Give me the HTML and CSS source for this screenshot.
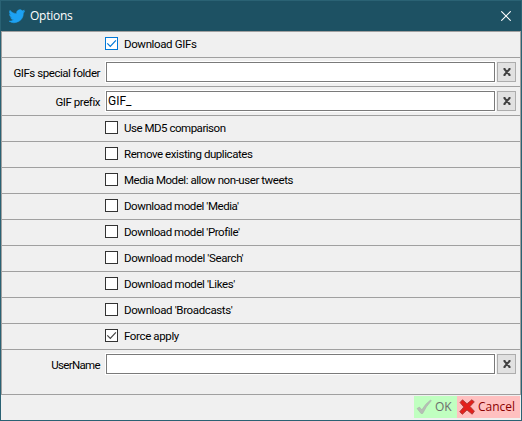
FILE: index.html
```html
<!DOCTYPE html>
<html lang="en">
<head>
<meta charset="utf-8">
<title>Options</title>
<link rel="stylesheet" href="styles.css">
</head>
<body>
<div class="window">
  <header class="titlebar">
    <svg class="bird" viewBox="0 0 24 24"><path d="M23.600 4.900a9.600 9.600 0 0 1-2.800.8 4.900 4.900 0 0 0 2.200-2.700 9.800 9.800 0 0 1-3.100 1.200 4.900 4.900 0 0 0-8.400 4.500A13.900 13.900 0 0 1 1.400 3.500a4.900 4.900 0 0 0 1.500 6.500 4.900 4.900 0 0 1-2.200-.6c0 2.300 1.600 4.400 3.900 4.900a4.900 4.900 0 0 1-2.200.1 4.900 4.900 0 0 0 4.600 3.400A9.900 9.900 0 0 1 0 19.800a13.900 13.900 0 0 0 21.500-12.300 10 10 0 0 0 2.100-2.600z"/></svg>
    <span class="title">Options</span>
    <svg class="close" viewBox="0 0 10 10"><path d="M.3.3l9.400 9.400M9.700.3L.3 9.700"/></svg>
  </header>
  <main class="rows">
    <label class="row focus"><span class="box"><svg viewBox="0 0 11 11"><path d="M1.300 5.300l3 3 5.600-6"/></svg></span><span class="text t1">Download GIFs</span></label>
    <div class="row field"><span class="name n1">GIFs special folder</span><span class="input"></span><span class="clear"><svg viewBox="0 0 8 8"><path d="M1.300 1l5.400 6M6.700 1L1.300 7M.5.9h2M5.500.9h2M.5 7.100h2M5.500 7.100h2"/></svg></span></div>
    <div class="row field"><span class="name n2">GIF prefix</span><span class="input">GIF_</span><span class="clear"><svg viewBox="0 0 8 8"><path d="M1.300 1l5.400 6M6.700 1L1.300 7M.5.9h2M5.500.9h2M.5 7.100h2M5.500 7.100h2"/></svg></span></div>
    <label class="row"><span class="box"></span><span class="text t2">Use MD5 comparison</span></label>
    <label class="row"><span class="box"></span><span class="text t3">Remove existing duplicates</span></label>
    <label class="row"><span class="box"></span><span class="text t4">Media Model: allow non-user tweets</span></label>
    <label class="row"><span class="box"></span><span class="text t5">Download model 'Media'</span></label>
    <label class="row"><span class="box"></span><span class="text t6">Download model 'Profile'</span></label>
    <label class="row"><span class="box"></span><span class="text t7">Download model 'Search'</span></label>
    <label class="row"><span class="box"></span><span class="text t8">Download model 'Likes'</span></label>
    <label class="row"><span class="box"></span><span class="text t9">Download 'Broadcasts'</span></label>
    <label class="row"><span class="box"><svg viewBox="0 0 11 11"><path d="M1.300 5.300l3 3 5.600-6"/></svg></span><span class="text t10">Force apply</span></label>
    <div class="row field last"><span class="name n3">UserName</span><span class="input"></span><span class="clear"><svg viewBox="0 0 8 8"><path d="M1.300 1l5.400 6M6.700 1L1.300 7M.5.9h2M5.500.9h2M.5 7.100h2M5.500 7.100h2"/></svg></span></div>
  </main>
  <footer class="actions">
    <div class="btn ok"><svg viewBox="0 0 16 16"><path d="M1 9.500l2.500-1.400 2.300 2.700Q9.500 4.500 14.500 1l.8.800Q10.300 7 6.700 14.500H5z"/></svg><span>OK</span></div>
    <div class="btn cancel"><svg viewBox="0 0 16 16"><path d="M1 3.500L3.500.8 8 4.800 12.800.8l2.500 2L11 7.500l4.400 4.700-2.200 3L8 11l-4.600 4.300-2.700-2.500L4.800 8z"/></svg><span>Cancel</span></div>
  </footer>
</div>
</body>
</html>
```

FILE: styles.css
```css
* { box-sizing: border-box; }
body { margin: 0; font: 11.5px/14px Roboto, "Liberation Sans", sans-serif; color: #000; }
svg { display: block; flex: none; }
.window { width: 522px; height: 421px; display: flex; flex-direction: column; background: #f0f0f0; border: 1px solid #2a6274; border-top: 0; }
.titlebar { height: 31px; flex: none; display: flex; align-items: center; background: #1d5163; color: #fff; border-top: 1px solid #2a6274; padding: 0 10px 0 8px; }
.bird { width: 16px; height: 16px; margin-top: -1px; fill: #1da1f2; stroke: #1da1f2; stroke-width: .7; }
.title { margin-left: 5px; font: 12px/16px "Open Sans", sans-serif; letter-spacing: -.25px; }
.close { width: 10px; height: 10px; margin: -1px 0 0 auto; stroke: #fff; stroke-width: 1.1; fill: none; }
.rows { border: 1px solid #a0a0a0; border-bottom: 0; }
.row { display: flex; height: 26px; padding: 5px 0 0 103px; border-bottom: 1px solid #a0a0a0; }
.box { width: 13px; height: 13px; flex: none; border: 1px solid #333; background: #fff; }
.box svg { width: 11px; height: 11px; fill: none; stroke: #444; stroke-width: 1.2; }
.focus .box { border-color: #0078d7; }
.focus .box svg { stroke: #0078d7; }
.text { margin-left: 6px; white-space: nowrap; letter-spacing: -.37px; }
.t2 { letter-spacing: -.48px; }
.t3, .t4, .t5, .t6 { letter-spacing: -.44px; }
.t8 { letter-spacing: -.4px; }
.field { height: 29px; padding: 4px 4px 0 0; }
.last { height: 45px; }
.name { width: 98px; flex: none; text-align: right; margin: 4px 6px 0 0; white-space: nowrap; letter-spacing: -.45px; }
.n3 { letter-spacing: -.65px; }
.input { flex: 1; height: 20px; padding: 2px 1px 0; font-size: 12px; background: #fff; border: 1px solid #7a7a7a; box-shadow: 0 0 0 1px #fff; }
.clear { width: 19px; height: 20px; margin-left: 2px; display: grid; place-items: center; background: #e1e1e1; border: 1px solid #adadad; }
.clear svg { width: 8px; height: 8px; stroke: #404040; stroke-width: 1.9; fill: none; }
.actions { display: flex; justify-content: flex-end; padding: 1px 1px 0 0; }
.btn { height: 22px; display: flex; align-items: center; padding-left: 2px; font: 12px/16px "Open Sans", sans-serif; }
.btn svg { width: 16px; height: 16px; margin-right: 3px; }
.ok { width: 43px; background: #c0ffc0; color: #6d6d6d; }
.ok svg { fill: #b6bdb6; stroke: #a5aca5; stroke-width: .5; }
.cancel { width: 63px; background: #ffc0c0; color: #8b0000; }
.cancel svg { fill: #e3201b; stroke: #a83b38; stroke-width: .9; }
```
